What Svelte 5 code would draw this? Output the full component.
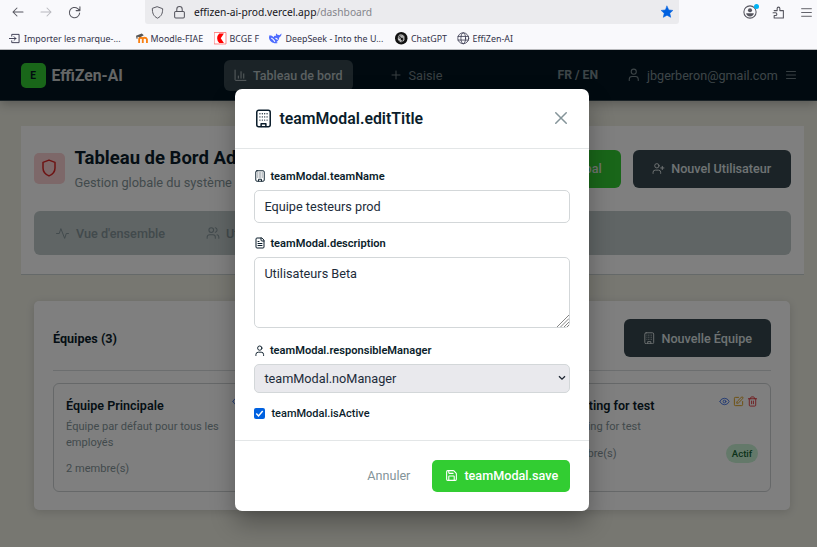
<script>
  const bookmarks = [
    { icon: 'import', label: 'Importer les marque-...', left: 9, gap: 4, w: 127 },
    { icon: 'moodle', label: 'Moodle-FIAE', left: 0, gap: 2, w: 78 },
    { icon: 'bcge', label: 'BCGE F', left: 0, gap: 3, w: 55 },
    { icon: 'deepseek', label: 'DeepSeek - Into the U...', left: 0, gap: 4, w: 126 },
    { icon: 'gpt', label: 'ChatGPT', left: 0, gap: 3.5, w: 62 },
    { icon: 'globe', label: 'EffiZen-AI', left: 0, gap: 3, w: 70 }
  ];
  const teams = [
    { name: 'Équipe Principale', desc: 'Équipe par défaut pour tous les employés', members: 2 },
    null,
    { name: 'Marketing for test', desc: 'Marketing for test', members: 1, status: 'Actif' }
  ];
  let teamName = $state('Equipe testeurs prod');
  let description = $state('Utilisateurs Beta');
  let active = $state(true);
</script>

{#snippet icon(name, size, sw = 2)}
  <svg width={size} height={size} viewBox="0 0 24 24" fill="none" stroke="currentColor" stroke-width={sw} stroke-linecap="round" stroke-linejoin="round">
    {#if name === 'building'}
      <rect x="3.500" y="1.500" width="17" height="21" rx="2.500" />
      <path d="M9 22v-3.500h6V22" />
      <path stroke-width="1.600" d="M7.500 6h.01M10.500 6h.01M13.500 6h.01M16.500 6h.01M7.500 10h.01M10.500 10h.01M13.500 10h.01M16.500 10h.01M7.500 14h.01M10.500 14h.01M13.500 14h.01M16.500 14h.01" />
    {:else if name === 'file'}
      <path d="M15 2H6a2 2 0 0 0-2 2v16a2 2 0 0 0 2 2h12a2 2 0 0 0 2-2V7Z" />
      <path d="M14 2v4a2 2 0 0 0 2 2h4M10 9H8M16 13H8M16 17H8" />
    {:else if name === 'user'}
      <path d="M20 22v-2a5 5 0 0 0-5-5H9a5 5 0 0 0-5 5v2" /><circle cx="12" cy="6.500" r="4.500" />
    {:else if name === 'userplus'}
      <path d="M16 21v-2a4 4 0 0 0-4-4H6a4 4 0 0 0-4 4v2M19 8v6M22 11h-6" /><circle cx="9" cy="7" r="4" />
    {:else if name === 'users'}
      <path d="M16 21v-2a4 4 0 0 0-4-4H6a4 4 0 0 0-4 4v2M22 21v-2a4 4 0 0 0-3-3.87M16 3.13a4 4 0 0 1 0 7.75" /><circle cx="9" cy="7" r="4" />
    {:else if name === 'activity'}
      <path d="M23 12h-4l-3 9L9 3l-3 9H1" />
    {:else if name === 'shield'}
      <path d="M12 22.500c5-2 8-5 8-10.500V4.500L12 1.500 4 4.500V12c0 5.500 3 8.500 8 10.500Z" />
    {:else if name === 'chart'}
      <path d="M2 2v18a1 1 0 0 0 1 1h19M18 17V9M13 17V5M8 17v-4" />
    {:else if name === 'plus'}
      <path d="M4 12h16M12 4v16" />
    {:else if name === 'menu'}
      <path d="M3 12h18M3 5h18M3 19h18" />
    {:else if name === 'x'}
      <path d="M19 5 5 19M5 5l14 14" />
    {:else if name === 'save'}
      <path d="M15.2 3a2 2 0 0 1 1.4.6l3.8 3.8a2 2 0 0 1 .6 1.4V19a2 2 0 0 1-2 2H5a2 2 0 0 1-2-2V5a2 2 0 0 1 2-2z" />
      <path d="M17 21v-7a1 1 0 0 0-1-1H8a1 1 0 0 0-1 1v7M7 3v4a1 1 0 0 0 1 1h7" />
    {:else if name === 'eye'}
      <path d="M2.06 12.35a1 1 0 0 1 0-.7 10.75 10.75 0 0 1 19.88 0 1 1 0 0 1 0 .7 10.75 10.75 0 0 1-19.88 0" /><circle cx="12" cy="12" r="3" />
    {:else if name === 'edit'}
      <path d="M12 3H5a2 2 0 0 0-2 2v14a2 2 0 0 0 2 2h14a2 2 0 0 0 2-2v-7" />
      <path d="M18.38 2.63a1 1 0 0 1 3 3l-9.01 9a2 2 0 0 1-.85.5l-2.88.84a.5.5 0 0 1-.62-.62l.84-2.87a2 2 0 0 1 .5-.86z" />
    {:else if name === 'trash'}
      <path d="M3 6h18M19 6v14a2 2 0 0 1-2 2H7a2 2 0 0 1-2-2V6M8 6V4a2 2 0 0 1 2-2h4a2 2 0 0 1 2 2v2M10 11v6M14 11v6" />
    {:else if name === 'back'}
      <path d="M22 12H2M10 4 2 12l8 8" />
    {:else if name === 'forward'}
      <path d="M2 12h20M14 4l8 8-8 8" />
    {:else if name === 'reload'}
      <path d="M21.500 13A9.500 9.500 0 1 1 18 4.800L21.500 8M22 1.500V8.500h-7" />
    {:else if name === 'ffshield'}
      <path d="M12 1.500 21.500 5c0 8-1.500 13.500-9.500 17.500C4 18.500 2.500 13 2.500 5Z" />
    {:else if name === 'lock'}
      <rect x="3" y="10" width="18" height="12" rx="2" /><path d="M7 10V6a5 5 0 0 1 10 0v4" />
    {:else if name === 'star'}
      <path fill="currentColor" d="m12 2 3 6.500 7 .8-5.200 4.800 1.500 7L12 17.500l-6.300 3.600 1.500-7L2 9.300l7-.8Z" />
    {:else if name === 'account'}
      <circle cx="12" cy="12" r="10.500" /><circle cx="12" cy="9" r="3.500" fill="currentColor" stroke="none" /><path fill="currentColor" stroke="none" d="M5.500 14h13c0 3-3 5.500-6.500 5.500S5.500 17 5.500 14Z" />
    {:else if name === 'puzzle'}
      <path d="M4 8.500h5.500V4.500a2.500 2.500 0 0 1 5 0v4H21V22H4v-4.500h2.500a2.500 2.500 0 0 0 0-5H2" />
    {:else if name === 'import'}
      <path d="M6 7V3h16v18H6v-4M0 12h15M11 8l4 4-4 4" />
    {:else if name === 'moodle'}
      <g stroke="#f98012" stroke-width="3.500" stroke-linecap="butt"><path d="M6 21v-7q0-3 3.500-3t3.500 3v7M13 21v-7q0-3 3.500-3t4.500 3v7" /></g>
      <path fill="#555" stroke="none" d="m0 7 11-4 4 3-7 4-5-1v4H1Z" />
    {:else if name === 'bcge'}
      <rect x="1" y="1" width="22" height="22" fill="#fff" stroke="#f66" stroke-width="1.500" />
      <path fill="#f00" stroke="none" d="M10 3h9l-6 9 6 9h-9Q6 17 6 12t4-9Z" />
    {:else if name === 'deepseek'}
      <path fill="#4d6bfe" stroke="none" d="M1 6q5 0 8 4c1-3 3-3 5-2-2-3 0-5 1-5 0 3 3 3 5 3l4-3c0 5-2 6-4 7-1 6-4 8-6 9l3 2c-8 2-16-2-17-10Q0 8 1 6Z" /><path stroke="#fff" stroke-width="2" d="M5 12q3 1 6 6M13 12l3 2" />
    {:else if name === 'gpt'}
      <circle cx="12" cy="12" r="12" fill="#111" stroke="none" />
      <g stroke="#fff" stroke-width="1"><path d="m12 5 5.500 3.500v7L12 19l-5.500-3.500v-7ZM9 6l7 4v7M17 8l-7 4v7M6 13l7 4M15 6 8 10v6M12 8l4 3M8 14l4 2" /></g>
    {:else if name === 'globe'}
      <circle cx="12" cy="12" r="10.500" /><ellipse cx="12" cy="12" rx="4.500" ry="10.500" /><path d="M2 8.500h20M2 15.500h20" />
    {/if}
  </svg>
{/snippet}

<div class="window">
  <div class="browser">
    <div class="toolbar">
      <div class="nav-icons">
        {@render icon('back', 12, 2.1)}
        <span class="faded">{@render icon('forward', 12, 2.1)}</span>
        {@render icon('reload', 13, 2)}
      </div>
      <div class="urlbar">
        {@render icon('ffshield', 13, 1.8)}
        {@render icon('lock', 13, 1.9)}
        <span class="url">effizen-ai-prod.vercel.app<i>/dashboard</i></span>
        <span class="star">{@render icon('star', 14, 1)}</span>
      </div>
      <div class="tools">
        <span class="account">{@render icon('account', 14, 1.8)}<b></b></span>
        {@render icon('puzzle', 13, 2)}
        {@render icon('menu', 13, 1.7)}
      </div>
    </div>
    <div class="bookmarks">
      {#each bookmarks as b}
        <div class="bookmark" style="width:{b.w}px;gap:{b.gap}px;margin-left:{b.left}px">
          {@render icon(b.icon, b.icon === 'import' ? 11 : 12.5, b.icon === 'globe' ? 1.5 : 2)}<span>{b.label}</span>
        </div>
      {/each}
    </div>
  </div>

  <div class="page">
    <header class="nav">
      <div class="logo">E</div>
      <div class="brand">EffiZen-AI</div>
      <div class="link current">{@render icon('chart', 13, 1.8)}<span>Tableau de bord</span></div>
      <div class="link entry">{@render icon('plus', 12)}<span>Saisie</span></div>
      <div class="lang">FR / EN</div>
      <div class="mail">{@render icon('user', 13.500, 1.9)}<span>jbgerberon@gmail.com</span>{@render icon('menu', 12, 1.8)}</div>
    </header>

    <section class="hero">
      <div class="hero-top">
        <div class="badge">{@render icon('shield', 18)}</div>
        <div class="titles">
          <h1>Tableau de Bord Administrateur</h1>
          <p>Gestion globale du système EffiZen</p>
        </div>
        <div class="btn green">Rapport Global</div>
        <div class="btn dark user-btn">{@render icon('userplus', 13, 1.8)}<span>Nouvel Utilisateur</span></div>
      </div>
      <div class="tabs">
        <div class="tab">{@render icon('activity', 13, 1.8)}<span>Vue d'ensemble</span></div>
        <div class="tab second">{@render icon('users', 14, 1.8)}<span>Utilisateurs</span></div>
      </div>
    </section>

    <section class="teams">
      <div class="teams-head">
        <h2>Équipes (3)</h2>
        <div class="btn dark team-btn">{@render icon('building', 12.500, 1.8)}<span>Nouvelle Équipe</span></div>
      </div>
      <div class="grid">
        {#each teams as t}
          <article>
            {#if t}
              <div class="acts">
                <span class="blue">{@render icon('eye', 11)}</span><span class="gold">{@render icon('edit', 11)}</span><span class="red">{@render icon('trash', 11)}</span>
              </div>
              <h3>{t.name}</h3>
              <p>{t.desc}</p>
              <div class="foot"><span>{t.members} membre(s)</span>{#if t.status}<em>{t.status}</em>{/if}</div>
            {/if}
          </article>
        {/each}
      </div>
    </section>

    <div class="overlay"></div>
  </div>

  <div class="modal">
    <div class="m-head">
      {@render icon('building', 19, 1.9)}
      <h2>teamModal.editTitle</h2>
      <span class="close">{@render icon('x', 18, 2)}</span>
    </div>
    <div class="m-body">
      <div class="label l1">{@render icon('building', 12, 1.9)}<span>teamModal.teamName</span></div>
      <input class="field" bind:value={teamName} />
      <div class="label l2">{@render icon('file', 12)}<span>teamModal.description</span></div>
      <div class="area">
        <textarea class="field" bind:value={description}></textarea>
        <svg class="grip" width="12" height="12" viewBox="0 0 12 12" stroke="#777" stroke-width=".9"><path d="M0 12 12 0M3.500 12 12 3.500M7 12l5-5M10 12l2-2" /></svg>
      </div>
      <div class="label l3">{@render icon('user', 11.500)}<span>teamModal.responsibleManager</span></div>
      <div class="field select"><span>teamModal.noManager</span>
        <svg width="8" height="6" viewBox="0 0 8 6" fill="none" stroke="#1c2430" stroke-width="1.300"><path d="m1 1.200 3 3 3-3" /></svg>
      </div>
      <label class="check">
        <input type="checkbox" bind:checked={active} />
        <span class="box"><svg width="11" height="11" viewBox="0 0 11 11" fill="none" stroke="#fff" stroke-width="1.500"><path d="m2.300 5.600 2.200 2.300 4.200-4.800" /></svg></span>
        <span>teamModal.isActive</span>
      </label>
    </div>
    <div class="m-foot">
      <span class="cancel">Annuler</span>
      <div class="save">{@render icon('save', 13)}<span>teamModal.save</span></div>
    </div>
  </div>
</div>

<style>
  .window { position: relative; width: 817px; height: 547px; overflow: hidden; font-family: Roboto, "Liberation Sans", sans-serif; color: #0b1d2b; }
  .window * { box-sizing: border-box; }
  svg { display: block; flex: none; }
  h1, h2, h3, p { margin: 0; white-space: nowrap; }
  span { white-space: nowrap; }

  .browser { height: 50px; background: #f9f9fc; border-bottom: 1px solid #b9babd; color: #55555e; font-family: "Noto Sans", sans-serif; }
  .toolbar { display: flex; height: 24px; }
  .nav-icons { width: 145px; padding-left: 12px; display: flex; align-items: center; gap: 16px; }
  .faded { color: #b8b8be; }
  .urlbar { width: 534px; background: #ebebee; border-radius: 0 0 3px 3px; display: flex; align-items: center; padding: 0 5px 0 6px; gap: 9px; }
  .url { font-size: 10.250px; color: #15141a; margin-left: -1px; }
  .url i { font-style: normal; color: #85858c; }
  .star { margin-left: auto; color: #0061e0; }
  .tools { display: flex; align-items: center; padding-left: 64px; gap: 15px; }
  .account { position: relative; }
  .account b { position: absolute; right: -2px; top: -1px; width: 5px; height: 5px; border-radius: 50%; background: #00b3f4; }
  .bookmarks { display: flex; height: 29px; align-items: center; font-size: 8.900px; color: #33334a; }
  .bookmark { display: flex; align-items: center; flex: none; }

  .page { position: relative; height: 497px; background: #eeeee3; overflow: hidden; }
  .overlay { position: absolute; inset: 0; background: rgba(0, 0, 0, .5); }
  .nav { height: 51px; background: #031521; display: flex; align-items: center; padding-left: 20.500px; border-bottom: 1px solid #36474f; box-shadow: 0 3px 10px rgba(0, 0, 0, .25); color: #7b8b90; font-size: 12.700px; }
  .logo { width: 25px; height: 25px; border-radius: 5px; background: #32cd32; color: #031521; display: grid; place-items: center; font-weight: 700; font-size: 10.200px; }
  .brand { width: 172px; margin-left: 6px; font-size: 15.700px; font-weight: 700; color: #c8cccd; }
  .link { display: flex; align-items: center; gap: 6.500px; }
  .current { width: 129px; height: 31px; border-radius: 6px; background: #36474f; color: #b7c1c3; padding-left: 10px; font-weight: 500; font-size: 12.500px; }
  .entry { width: 205px; padding-left: 37px; gap: 7px; color: #728086; }
  .lang { width: 69px; font-weight: 700; font-size: 12.200px; color: #7b8b90; }
  .mail { display: flex; align-items: center; gap: 7px; font-size: 12.600px; }

  .hero { margin: 25px 0 0 20.500px; width: 783px; height: 149px; background: #fff; border-bottom: 1px solid #cbd3d3; padding: 23.500px 13px 0; }
  .hero-top { display: flex; height: 38px; }
  .badge { width: 32px; height: 31px; margin-top: 3px; border-radius: 5px; background: #fbd0d2; color: #dc2626; display: grid; place-items: center; }
  .titles { width: 360px; margin-left: 9px; }
  h1 { font-size: 18.500px; line-height: 22px; margin-top: -3px; font-weight: 700; }
  .titles p { font-size: 12.800px; line-height: 16px; margin-top: 6px; color: #849499; }
  .btn { height: 38px; border-radius: 6px; display: flex; align-items: center; font-size: 12.600px; font-weight: 500; color: #fff; }
  .green { background: #32cd32; color: #dfe8df; width: 174px; justify-content: flex-end; padding-right: 19px; margin-left: 13px; }
  .dark { background: #36474f; color: #dfe5e6; }
  .user-btn { width: 157.500px; margin-left: 12.500px; padding-left: 19px; gap: 6px; }
  .tabs { height: 44px; margin-top: 23.500px; border-radius: 6px; background: #c0caca; display: flex; align-items: center; padding-left: 22.500px; color: #849499; font-size: 12.650px; font-weight: 500; }
  .tab { display: flex; align-items: center; gap: 7px; width: 150px; }
  .second { gap: 6px; }

  .teams { margin: 26px 0 0 34px; width: 756px; height: 209px; background: #fff; border-radius: 5px; padding: 18px 19px; box-shadow: 0 2px 8px rgba(0, 0, 0, .14); }
  .teams-head { height: 52px; border-bottom: 1px solid #d9dcdf; display: flex; justify-content: space-between; }
  .teams-head h2 { font-size: 12.600px; line-height: 39px; font-weight: 700; }
  .team-btn { width: 147px; padding-left: 19px; gap: 6px; height: 38px; }
  .grid { display: grid; grid-template-columns: repeat(3, 1fr); gap: 13px; margin-top: 12px; }
  article { position: relative; height: 109px; min-width: 0; border: 1px solid #ccd0d2; border-radius: 6px; padding: 14px 12px; }
  h3 { font-size: 12.550px; line-height: 16px; font-weight: 600; }
  article p { font-size: 11.050px; line-height: 15.500px; color: #849499; margin-top: 5px; width: 165px; white-space: normal; }
  .foot { display: flex; justify-content: space-between; align-items: center; margin-top: 9px; height: 19px; font-size: 11.050px; color: #849499; }
  .foot em { font-style: normal; font-size: 9.600px; font-weight: 500; color: #166534; background: #c9f2d5; border-radius: 10px; height: 19px; width: 32px; display: grid; place-items: center; }
  .acts { position: absolute; right: 12px; top: 12px; display: flex; gap: 3px; }
  .blue { color: #3b6fe6; } .gold { color: #d99a10; } .red { color: #e0353b; }

  .modal { position: absolute; left: 235.400px; top: 88.500px; width: 353.500px; height: 422px; background: #fff; border-radius: 7px; box-shadow: 0 12px 24px rgba(0, 0, 0, .3); }
  .m-head { height: 60.500px; border-bottom: 1px solid #e3e6e7; display: flex; align-items: center; padding: 0 19px; }
  .m-head h2 { font-size: 15.850px; font-weight: 600; margin-left: 6px; }
  .close { margin-left: auto; color: #849499; }
  .m-body { height: 292px; border-bottom: 1px solid #e3e6e7; padding: 20px 19px 0; }
  .label { display: flex; align-items: center; gap: 4px; height: 14px; font-size: 11.100px; font-weight: 600; }
  .l2 { margin-top: 13px; } .l3 { margin-top: 15.500px; }
  .field { display: block; width: 316px; height: 33px; margin: 7px 0 0; border: 1px solid #d3d7d9; border-radius: 5px; padding: 0 9px; font: 12.700px Roboto, "Liberation Sans", sans-serif; color: #1d2c3a; background: #fff; outline: 0; }
  .area { position: relative; }
  textarea.field { height: 71px; resize: none; padding-top: 8px; overflow: hidden; }
  .grip { position: absolute; right: 1px; bottom: 1px; }
  .select { display: flex; height: 29px; align-items: center; justify-content: space-between; background: #e9e9ed; padding-right: 3px; margin-top: 6px; }
  .check { display: flex; align-items: center; height: 14px; margin-top: 14px; font-size: 11px; font-weight: 500; }
  .check input { position: absolute; opacity: 0; }
  .box { width: 11px; height: 11px; border-radius: 2px; background: #0061e0; margin-right: 6px; }
  .m-foot { display: flex; align-items: center; justify-content: flex-end; height: 69px; padding-right: 19px; }
  .cancel { font-size: 12.600px; color: #849499; margin-right: 22px; }
  .save { width: 137.500px; height: 32px; border-radius: 5px; background: #32cd32; color: #fff; display: flex; align-items: center; gap: 6px; padding-left: 13px; font-size: 12.650px; font-weight: 500; }
</style>
